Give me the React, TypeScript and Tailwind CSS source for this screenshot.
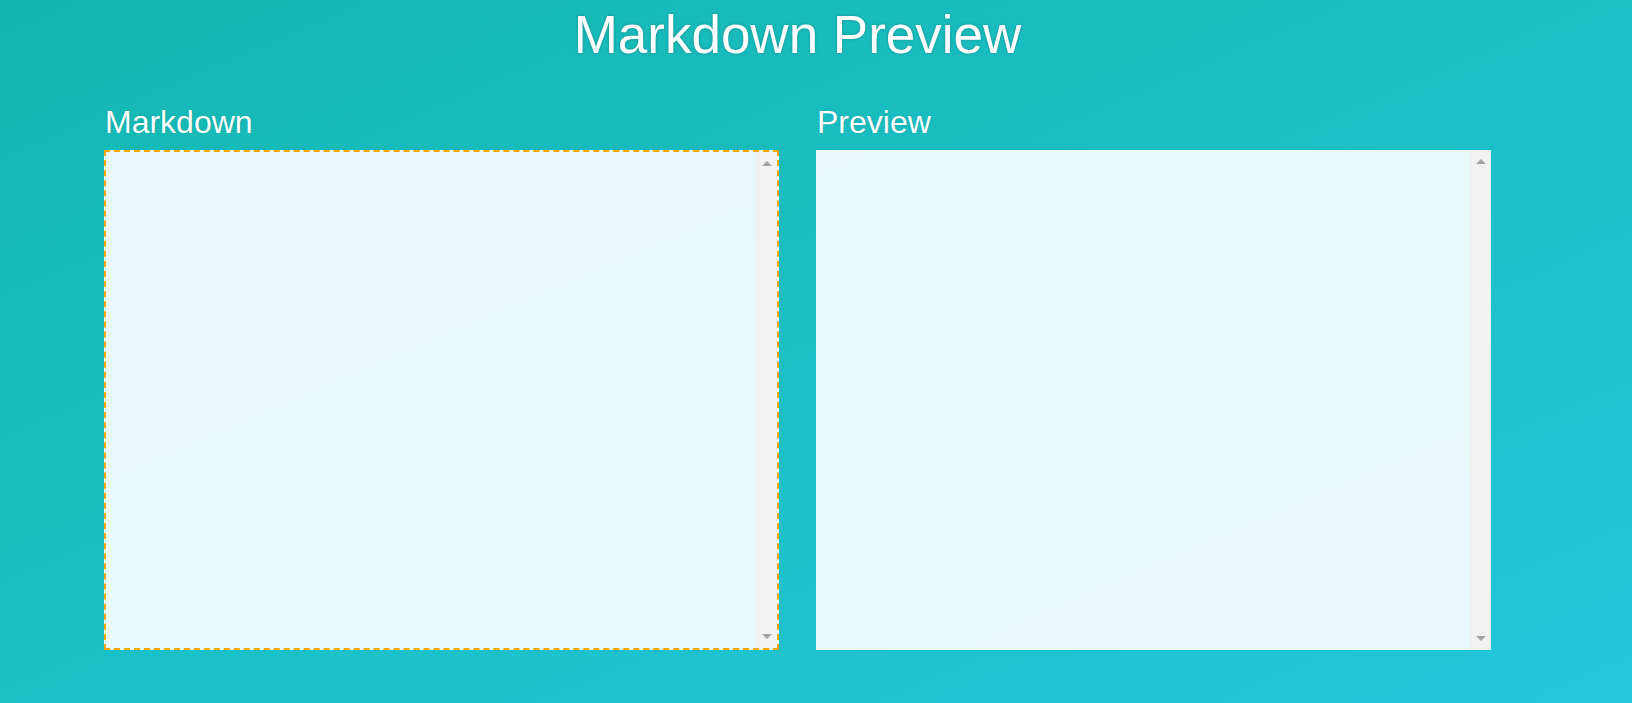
import React from "react";

const Scrollbar = () => {
  return (
    <div className="w-[21px] h-full bg-[#f1f1f1] flex flex-col items-center justify-between py-[9px]">
      <div className="w-0 h-0 border-l-[5px] border-r-[5px] border-b-[5px] border-l-transparent border-r-transparent border-b-[#a3a3a3]"></div>
      <div className="w-0 h-0 border-l-[5px] border-r-[5px] border-t-[5px] border-l-transparent border-r-transparent border-t-[#a3a3a3]"></div>
    </div>
  );
};

const Panel = ({ title, focused }: { title: string; focused?: boolean }) => {
  return (
    <div className="w-[675px] flex flex-col">
      <p className="text-[32px] leading-none text-white mb-[12px] pl-[1px] [text-shadow:0_0_2px_rgba(0,0,0,0.15)]">
        {title}
      </p>
      <div
        className={`h-[500px] w-full flex justify-end bg-white/90 ${
          focused ? "border-2 border-dashed border-[#ffa500]" : ""
        }`}
      >
        <Scrollbar />
      </div>
    </div>
  );
};

const App = () => {
  return (
    <div
      className="min-h-screen w-full bg-linear-to-br from-[#14b7b0] to-[#22c8db] overflow-hidden"
      style={{ fontFamily: '"Liberation Sans", Arial, sans-serif' }}
    >
      <div className="w-[1387px] ml-[104px] flex flex-col">
        <h1 className="text-[53px] leading-none text-white text-center mt-[8px] [text-shadow:0_0_3px_rgba(0,0,0,0.25)]">
          Markdown Preview
        </h1>
        <div className="flex gap-[37px] mt-[45px]">
          <Panel title="Markdown" focused />
          <Panel title="Preview" />
        </div>
      </div>
    </div>
  );
};

export default App;
